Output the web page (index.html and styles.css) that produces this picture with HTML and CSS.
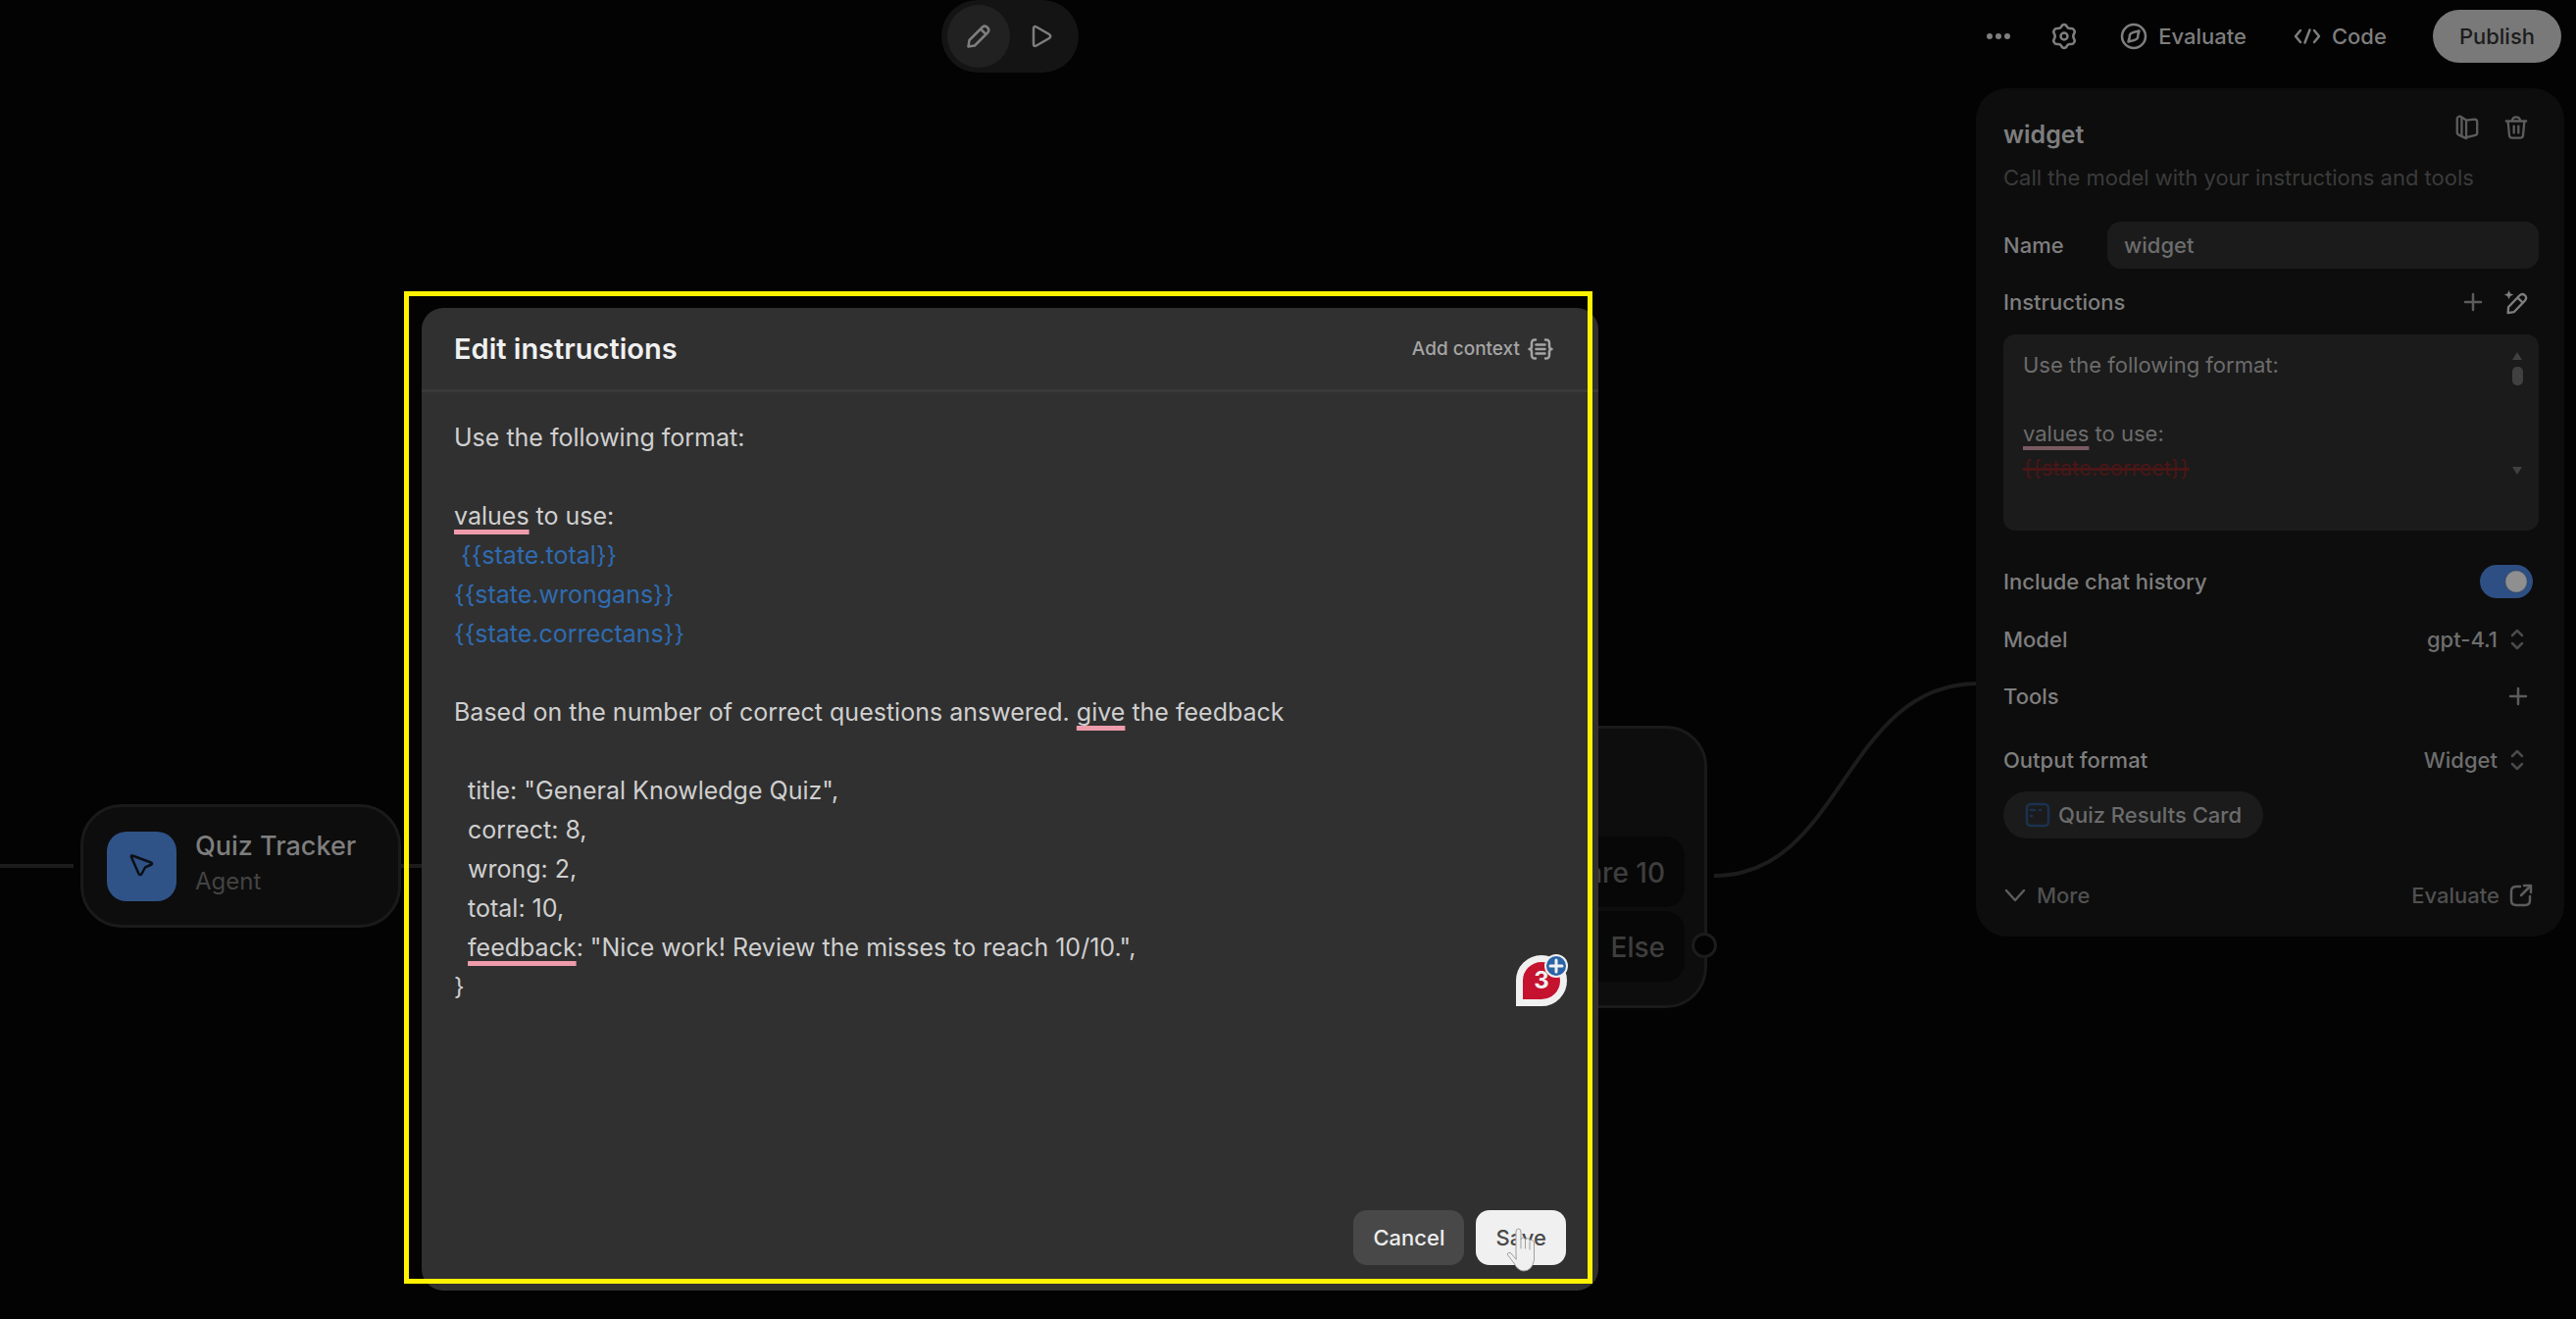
FILE: index.html
```html
<!DOCTYPE html>
<html lang="en">
<head>
<meta charset="utf-8">
<meta name="viewport" content="width=device-width, initial-scale=1">
<title>Workflow builder</title>
<link rel="stylesheet" href="styles.css">
</head>
<body>
<div class="app">
  <div class="canvas">
    <svg class="edges" aria-hidden="true">
      <path d="M0 883H75M409 883H432M1748 893C1880 893 1880 697 2017 697"/>
    </svg>
    <div class="node node-agent">
      <span class="node-icon">
        <svg width="28" height="28" viewBox="0 0 28 28"><path d="M4 3.500L23 10.500Q25 11.500 23.500 12.500L17 15.500L13.500 22Q12 24 10.500 22L3 5Q2.500 3 4 3.500Z"/></svg>
      </span>
      <div>
        <div class="node-title">Quiz Tracker</div>
        <div class="node-kind">Agent</div>
      </div>
    </div>
    <div class="node node-branch">
      <div class="branch">are 10</div>
      <div class="branch">Else<span class="port"></span></div>
    </div>
  </div>

  <header class="topbar">
    <div class="modes">
      <button class="mode active" aria-label="Edit">
        <svg width="28" height="28" viewBox="0 0 28 28"><path d="M3.500 24.500L4.500 18L18 4.500Q20.500 2.500 23 5T23.500 10L10 23.500ZM16 6.500L21.500 12"/></svg>
      </button>
      <button class="mode" aria-label="Preview">
        <svg width="28" height="28" viewBox="0 0 28 28"><path d="M6 6.500Q6 3 9 4.500L22 12Q24.500 14 22 16L9 23.500Q6 25 6 21.500Z"/></svg>
      </button>
    </div>
    <nav class="actions">
      <button class="action" aria-label="More actions"><svg width="26" height="28" viewBox="0 0 26 28"><g class="solid"><circle cx="4" cy="14" r="3"/><circle cx="13" cy="14" r="3"/><circle cx="22" cy="14" r="3"/></g></svg></button>
      <button class="action" aria-label="Settings"><svg width="28" height="28" viewBox="0 0 28 28"><path d="M14 2Q16 2 17 4.500Q18 6 20 6Q23 5.500 24 7.500Q25.500 9.500 24 11.500Q22.500 14 24 16.500Q25.500 18.500 24 20.500Q23 22.500 20 22Q18 22 17 23.500Q16 26 14 26Q12 26 11 23.500Q10 22 8 22Q5 22.500 4 20.500Q2.500 18.500 4 16.500Q5.500 14 4 11.500Q2.500 9.500 4 7.500Q5 5.500 8 6Q10 6 11 4.500Q12 2 14 2Z"/><circle cx="14" cy="14" r="3.500"/></svg></button>
      <button class="action wide"><svg width="28" height="28" viewBox="0 0 28 28"><circle cx="14" cy="14" r="12"/><path d="M19.500 8.500Q18 13 18 15.500Q17 18 8.500 19.500Q10 15 10 12.500Q11 10 19.500 8.500Z"/></svg>Evaluate</button>
      <button class="action"><svg width="28" height="28" viewBox="0 0 28 28"><path d="M7 8L2 14L7 20M21 8L26 14L21 20M16.500 7.500L11.500 20.500"/></svg>Code</button>
      <button class="publish">Publish</button>
    </nav>
  </header>

  <aside class="panel">
    <div class="row head">
      <h2>widget</h2>
      <div class="tools">
        <button class="icon" aria-label="Documentation"><svg width="26" height="26" viewBox="0 0 28 28"><path d="M13 6L7 2Q4 1 3 4V19Q3 21.500 5.500 22.500L13 26V6L22 5Q25 5 25 8V20Q25 22 23 22.500L13 25M8 3.500V23"/></svg></button>
        <button class="icon" aria-label="Delete"><svg width="26" height="26" viewBox="0 0 28 28"><path d="M3 7H25M9.500 6.500Q10 2.500 14 2.500T18.500 6.500M5 7.500L6.500 23Q7 25.500 9.500 25.500H18.500Q21 25.500 21.500 23L23 7.500M11.500 12.500V20M16.500 12.500V20"/></svg></button>
      </div>
    </div>
    <p class="desc">Call the model with your instructions and tools</p>
    <div class="row name">
      <label for="name">Name</label>
      <input id="name" type="text" value="widget">
    </div>
    <div class="row instr">
      <span id="instructions-label">Instructions</span>
      <div class="tools">
        <button class="icon" aria-label="Add context"><svg width="22" height="22" viewBox="0 0 22 22"><path d="M11 3V19M3 11H19"/></svg></button>
        <button class="icon bright" aria-label="Edit instructions"><svg width="26" height="26" viewBox="0 0 28 28"><path d="M5 26L5.500 19.500L17.500 7Q20.500 4 23.500 6.500Q26.500 9.500 23.500 12.500L11.500 25ZM15.500 9L21 14.500"/><path class="solid" d="M6 1L7.500 4.500L11 6L7.500 7.500L6 11L4.500 7.500L1 6L4.500 4.500Z"/></svg></button>
      </div>
    </div>
    <div class="field">
      <div class="field-text" role="textbox" aria-labelledby="instructions-label">
        <div class="line">Use the following format:</div>
        <div class="line"></div>
        <div class="line"><span class="spell">values</span> to use:</div>
        <div class="line"><span class="invalid">{{state.correct}}</span></div>
      </div>
      <svg class="scroll" width="12" height="132" viewBox="0 0 12 132" aria-hidden="true"><path d="M6 2L11 10H1ZM1 119H11L6 127Z"/><rect x="1" y="17" width="11" height="19" rx="5"/></svg>
    </div>
    <div class="row history">
      <label for="history">Include chat history</label>
      <input id="history" class="switch" type="checkbox" checked>
    </div>
    <div class="row">
      <span>Model</span>
      <button class="select">gpt-4.1<svg width="14" height="26" viewBox="0 0 14 26"><path d="M2 9L7 4L12 9M2 17L7 22L12 17"/></svg></button>
    </div>
    <div class="row">
      <span>Tools</span>
      <div class="tools"><button class="icon" aria-label="Add tool"><svg width="22" height="22" viewBox="0 0 22 22"><path d="M11 3V19M3 11H19"/></svg></button></div>
    </div>
    <div class="row output">
      <span>Output format</span>
      <button class="select">Widget<svg width="14" height="26" viewBox="0 0 14 26"><path d="M2 9L7 4L12 9M2 17L7 22L12 17"/></svg></button>
    </div>
    <button class="chip"><svg width="26" height="26" viewBox="0 0 26 26"><rect x="2" y="2" width="22" height="22" rx="4"/><path d="M6 8H10M15 8H16M6 14H7"/></svg>Quiz Results Card</button>
    <div class="row foot">
      <button class="link"><svg width="24" height="24" viewBox="0 0 24 24"><path d="M3 7L12 17L21 7"/></svg>More</button>
      <a class="link" href="#evaluate">Evaluate<svg width="24" height="24" viewBox="0 0 24 24"><path d="M11 3H7Q2 3 2 8V17Q2 22 7 22H16Q21 22 21 17V13M15 2H22V9M22 2L12 12"/></svg></a>
    </div>
  </aside>

  <div class="overlay">
    <section class="modal" role="dialog" aria-labelledby="modal-title">
      <header class="modal-head">
        <h1 id="modal-title">Edit instructions</h1>
        <button class="context">Add context<svg width="26" height="22" viewBox="0 0 26 22"><path d="M8 1.500Q4 1 4 5V8Q4 11 1.500 11Q4 11 4 14V17Q4 21 8 20.500M18 1.500Q22 1 22 5V8Q22 11 24.500 11Q22 11 22 14V17Q22 21 18 20.500M8.500 6.500H17.500M8.500 11H17.500M8.500 15.500H17.500"/></svg></button>
      </header>
      <div class="editor" role="textbox" aria-label="Instructions" aria-multiline="true">
        <div class="line">Use the following format:</div>
        <div class="line"></div>
        <div class="line"><span class="spell">values</span> to use:</div>
        <div class="line var"> {{state.total}}</div>
        <div class="line var">{{state.wrongans}}</div>
        <div class="line var">{{state.correctans}}</div>
        <div class="line"></div>
        <div class="line">Based on the number of correct questions answered. <span class="spell">give</span> the feedback</div>
        <div class="line"></div>
        <div class="line">  title: "General Knowledge Quiz",</div>
        <div class="line">  correct: 8,</div>
        <div class="line">  wrong: 2,</div>
        <div class="line">  total: 10,</div>
        <div class="line">  <span class="spell">feedback</span>: "Nice work! Review the misses to reach 10/10.",</div>
        <div class="line">}</div>
      </div>
      <footer class="modal-foot">
        <button class="btn">Cancel</button>
        <button class="btn primary">Save</button>
      </footer>
      <div class="checker">3<span class="plus"><svg width="20" height="20" viewBox="0 0 20 20"><path d="M10 4V16M4 10H16"/></svg></span></div>
      <svg class="pointer" width="34" height="48" viewBox="0 0 34 48" aria-hidden="true"><path d="M11 27V6Q11 3 13.500 3T16 6V14Q18 10 20.500 14Q24 11 25 15Q29 13 29.500 18V35Q27 46 19 46Q13 46 9 38L2 29Q3 26 6 28L11 34Z"/><path d="M16 14V23M20.500 14V23M25 16V24"/></svg>
      <div class="highlight"></div>
    </section>
  </div>
</div>
</body>
</html>
```
FILE: styles.css
```css
* { box-sizing: border-box; }

body {
  margin: 0;
  background: #030303;
  color: #7e7e7e;
  font: 500 22px/32px Inter, "Liberation Sans", sans-serif;
}

button, input { font: inherit; color: inherit; }
button { border: 0; padding: 0; background: none; cursor: pointer; }
h1, h2, p { margin: 0; }

svg {
  flex: none;
  fill: none;
  stroke: currentColor;
  stroke-width: 2.500;
  stroke-linecap: round;
  stroke-linejoin: round;
}
.solid { fill: currentColor; stroke: none; }

.app {
  position: relative;
  min-height: 100vh;
  overflow: hidden;
}

/* Canvas */
.canvas { position: absolute; inset: 0; }
.edges {
  position: absolute;
  width: 100%;
  height: 100%;
  stroke: #1c1c1c;
  stroke-width: 4;
  stroke-linecap: butt;
}
.node {
  position: absolute;
  border: 3px solid #1a1a1a;
  border-radius: 42px;
  background: #0d0d0d;
}
.node-agent {
  left: 82px;
  top: 820px;
  width: 327px;
  height: 126px;
  padding: 0 24px;
  display: flex;
  align-items: center;
  gap: 19px;
}
.node-icon {
  width: 71px;
  height: 71px;
  border-radius: 20px;
  background: #305387;
  color: #0b0f16;
  display: grid;
  place-items: center;
}
.node-title { font-size: 27px; line-height: 36px; }
.node-kind { font-size: 24px; line-height: 36px; padding-bottom: 4px; font-weight: 400; color: #434343; }
.node-branch {
  left: 1340px;
  top: 740px;
  width: 401px;
  height: 288px;
  padding: 20px;
  display: flex;
  flex-direction: column;
  justify-content: flex-end;
  gap: 4px;
  padding-bottom: 24px;
}
.branch {
  position: relative;
  padding: 17px 20px 15px;
  border-radius: 20px;
  background: #070707;
  color: #3e3e3e;
  font-size: 28px;
  line-height: 40px;
  text-align: right;
}
.port {
  position: absolute;
  right: -33px;
  top: 22px;
  width: 26px;
  height: 26px;
  border: 3px solid #1c1c1c;
  border-radius: 50%;
  background: #030303;
}

/* Top bar */
.topbar {
  position: relative;
  display: grid;
  align-items: center;
  height: 74px;
}
.modes {
  grid-area: 1 / 1;
  justify-self: center;
  margin-right: 567px;
  display: flex;
  height: 74px;
  padding: 5px 6px;
  border-radius: 37px;
  background: #141414;
}
.mode {
  width: 64px;
  border-radius: 32px;
  display: grid;
  place-items: center;
}
.mode.active { background: #212121; }
.actions {
  grid-area: 1 / 1;
  justify-self: end;
  display: flex;
  align-items: center;
  gap: 40px;
  padding-right: 15px;
}
.action { display: flex; align-items: center; gap: 11px; }
.wide { margin: 0 8px 0 3px; }
.publish {
  height: 54px;
  margin-left: 7px;
  padding: 0 27px;
  border-radius: 27px;
  background: #797979;
  color: #1c1c1c;
}

/* Inspector */
.panel {
  position: relative;
  width: 600px;
  margin: 16px 12px 0 auto;
  padding: 24px 26px 12px 28px;
  border-radius: 32px;
  background: #0d0d0d;
}
.row {
  display: flex;
  align-items: center;
  justify-content: space-between;
  height: 58px;
}
.head { height: 46px; }
.head .tools { align-self: flex-start; gap: 24px; padding-top: 3px; }
h2 { font-size: 25px; line-height: 46px; font-weight: 600; }
.desc { margin-top: 5px; color: #3b3b3b; font-weight: 400; }
.name { height: 48px; margin-top: 29px; }
.name input {
  width: 440px;
  height: 48px;
  padding: 0 17px;
  border: 0;
  border-radius: 14px;
  background: #1b1b1b;
  color: #6c6c6c;
}
.instr { height: 67px; }
.tools { display: flex; align-items: center; gap: 20px; padding-right: 10px; color: #5c5c5c; }
.icon { display: grid; place-items: center; }
.bright { color: #7e7e7e; }
.field {
  display: flex;
  justify-content: space-between;
  height: 200px;
  padding: 14px 16px 0 20px;
  border-radius: 12px;
  background: #1b1b1b;
}
.field-text {
  color: #6c6c6c;
  line-height: 35px;
  font-weight: 400;
}
.line { min-height: 35px; white-space: pre-wrap; }
.scroll { margin-top: 2px; fill: #404040; stroke: none; }
.field .spell { text-decoration-color: #7a5a61; text-decoration-thickness: 4px; }
.invalid { color: #4a1616; text-decoration: line-through 3px #4a1616; }
.history { height: 46px; margin: 29px 0 7px; padding-right: 6px; }
.switch {
  appearance: none;
  width: 54px;
  height: 34px;
  margin: 0;
  border-radius: 17px;
  background: radial-gradient(circle 12px at 37px 17px, #8f8f8f 10px, #1c3c66 12px, transparent 12px) #2d4f83;
}
.select { display: flex; align-items: center; gap: 13px; padding-right: 15px; color: #6e6e6e; }
.select svg { color: #4a4a4a; }
.output { height: 72px; }
.chip {
  display: flex;
  align-items: center;
  gap: 8px;
  height: 48px;
  margin-top: -4px;
  padding: 0 22px;
  border-radius: 24px;
  background: #1b1b1b;
  color: #6c6c6c;
}
.chip svg { color: #1b3250; }
.foot { height: 60px; margin-top: 28px; padding-right: 6px; }
.link { display: flex; align-items: center; gap: 10px; color: #505050; text-decoration: none; }
.link svg { color: #5c5c5c; }

/* Dialog */
.overlay {
  position: absolute;
  inset: 0;
  display: flex;
  justify-content: center;
  padding: 314px 567px 29px 0;
}
.modal {
  position: relative;
  display: flex;
  flex-direction: column;
  width: 1200px;
  border-radius: 22px;
  background: #303030;
}
.modal-head {
  display: flex;
  align-items: center;
  justify-content: space-between;
  height: 86px;
  padding: 0 46px 0 33px;
  border-bottom: 3px solid #3a3a3a;
}
h1 { font-size: 29px; line-height: 40px; font-weight: 600; color: #f0f0f0; }
.context { display: flex; align-items: center; gap: 8px; font-size: 19px; color: #a5a5a5; }
.editor {
  flex: 1;
  padding: 26px 33px;
  color: #cfcfcf;
  font-size: 25px;
  line-height: 40px;
  font-weight: 400;
}
.editor .line { min-height: 40px; }
.spell {
  text-decoration: underline 5px #ee9bac;
  text-underline-offset: 5px;
  text-decoration-skip-ink: none;
}
.editor .var { color: #2f6bb0; }
.modal-foot { display: flex; justify-content: flex-end; gap: 12px; padding: 0 33px 26px; }
.btn {
  height: 56px;
  padding: 0 20px;
  border-radius: 14px;
  background: #484848;
  color: #ececec;
}
.primary { background: #f0f0f0; color: #4a4a4a; }
.checker {
  position: absolute;
  right: 32px;
  bottom: 290px;
  width: 52px;
  height: 52px;
  border: 7px solid #f0f0f0;
  border-radius: 26px 26px 26px 0;
  background: #c4122f;
  color: #f0f0f0;
  font-size: 24px;
  line-height: 38px;
  font-weight: 700;
  text-align: center;
}
.plus {
  position: absolute;
  right: -8px;
  top: -8px;
  width: 24px;
  height: 24px;
  border: 2px solid #f0f0f0;
  border-radius: 50%;
  background: #2a64a8;
}
.plus svg { display: block; stroke-width: 3; }
.pointer {
  position: absolute;
  right: 61px;
  bottom: 18px;
  fill: #f0f0f0;
  stroke: #a0a0a0;
  stroke-width: 1;
}
.highlight {
  position: absolute;
  inset: -17px 6px 7px -18px;
  border: 5px solid #fff200;
  pointer-events: none;
}
```
